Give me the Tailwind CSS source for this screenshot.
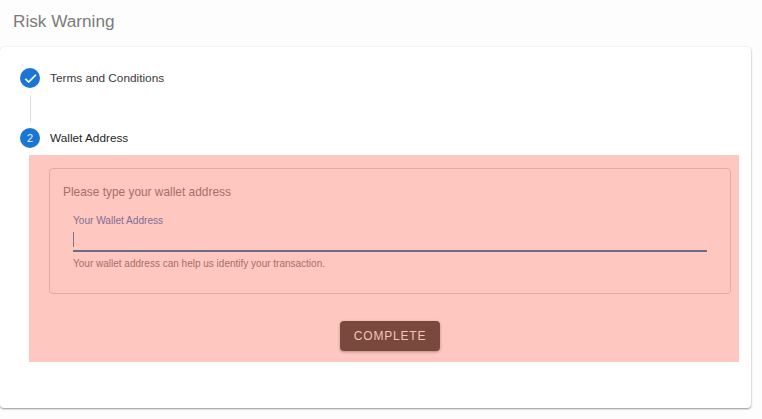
<!doctype html>
<html>
<head>
  <meta charset="UTF-8">
  <script src="https://cdn.jsdelivr.net/npm/@tailwindcss/browser@4"></script>
  <title>Risk Warning</title>
</head>
<body class="w-[762px] h-[419px] overflow-hidden bg-[#fdfdfd] font-['Liberation_Sans',Arial,sans-serif]">
  <h1 class="h-[47px] pl-[13px] pt-[11px] text-[17.2px] leading-[21px] font-normal text-[#7b7b7b]">Risk Warning</h1>

  <div class="w-[751px] h-[361px] rounded-[4px] bg-white pt-[21px] shadow-[0_1px_2px_rgba(0,0,0,0.4),0_0_3px_rgba(0,0,0,0.06)]">
    <div class="flex items-center gap-[10px] pl-[20px] h-[20px]">
      <span class="flex h-[20px] w-[20px] items-center justify-center rounded-full bg-[#1976d2]">
        <svg width="15" height="15" viewBox="0 0 24 24" fill="#fff" stroke="#fff" stroke-width="0.8"><path d="M9 16.2 4.8 12l-1.4 1.4L9 19 21 7l-1.4-1.4z"/></svg>
      </span>
      <span class="pt-[1px] text-[11.8px] text-[#3a3a3a]">Terms and Conditions</span>
    </div>

    <div class="ml-[30px] mt-[7px] mb-[6px] h-[27px] w-px bg-[#dedede]"></div>

    <div class="flex items-center gap-[10px] pl-[20px] h-[20px]">
      <span class="flex h-[20px] w-[20px] items-center justify-center rounded-full bg-[#1976d2] text-[11px] text-white/90">2</span>
      <span class="pt-[1px] text-[11.8px] text-[#1f1f1f]">Wallet Address</span>
    </div>

    <section class="ml-[29px] mt-[7px] h-[207px] w-[710px] bg-[#fec7bf] pl-[20px] pr-[8px] pt-[13px]">
      <div class="h-[126px] rounded-[4px] border border-[#e5aaa3] pl-[13px] pr-[23px] pt-[16px]">
        <p class="text-[11.9px] leading-[15px] text-[#a86f69]">Please type your wallet address</p>
        <div class="ml-[10px] mt-[15px]">
          <label class="block text-[10.1px] leading-[12px] text-[#7f6f97]">Your Wallet Address</label>
          <div class="mt-[5px] h-[20px] border-b-2 border-[#6f6b85]">
            <div class="h-[15px] w-px bg-[#7d7590]"></div>
          </div>
          <p class="mt-[6px] text-[10px] leading-[12px] text-[#a86f69]">Your wallet address can help us identify your transaction.</p>
        </div>
      </div>
      <div class="mt-[27px] flex justify-center">
        <button class="h-[30px] w-[100px] rounded-[4px] bg-[#7b483d] text-[12px] tracking-[0.8px] text-[#f3c4ba] shadow-[0_1px_3px_rgba(0,0,0,0.3)]">COMPLETE</button>
      </div>
    </section>
  </div>
</body>
</html>
